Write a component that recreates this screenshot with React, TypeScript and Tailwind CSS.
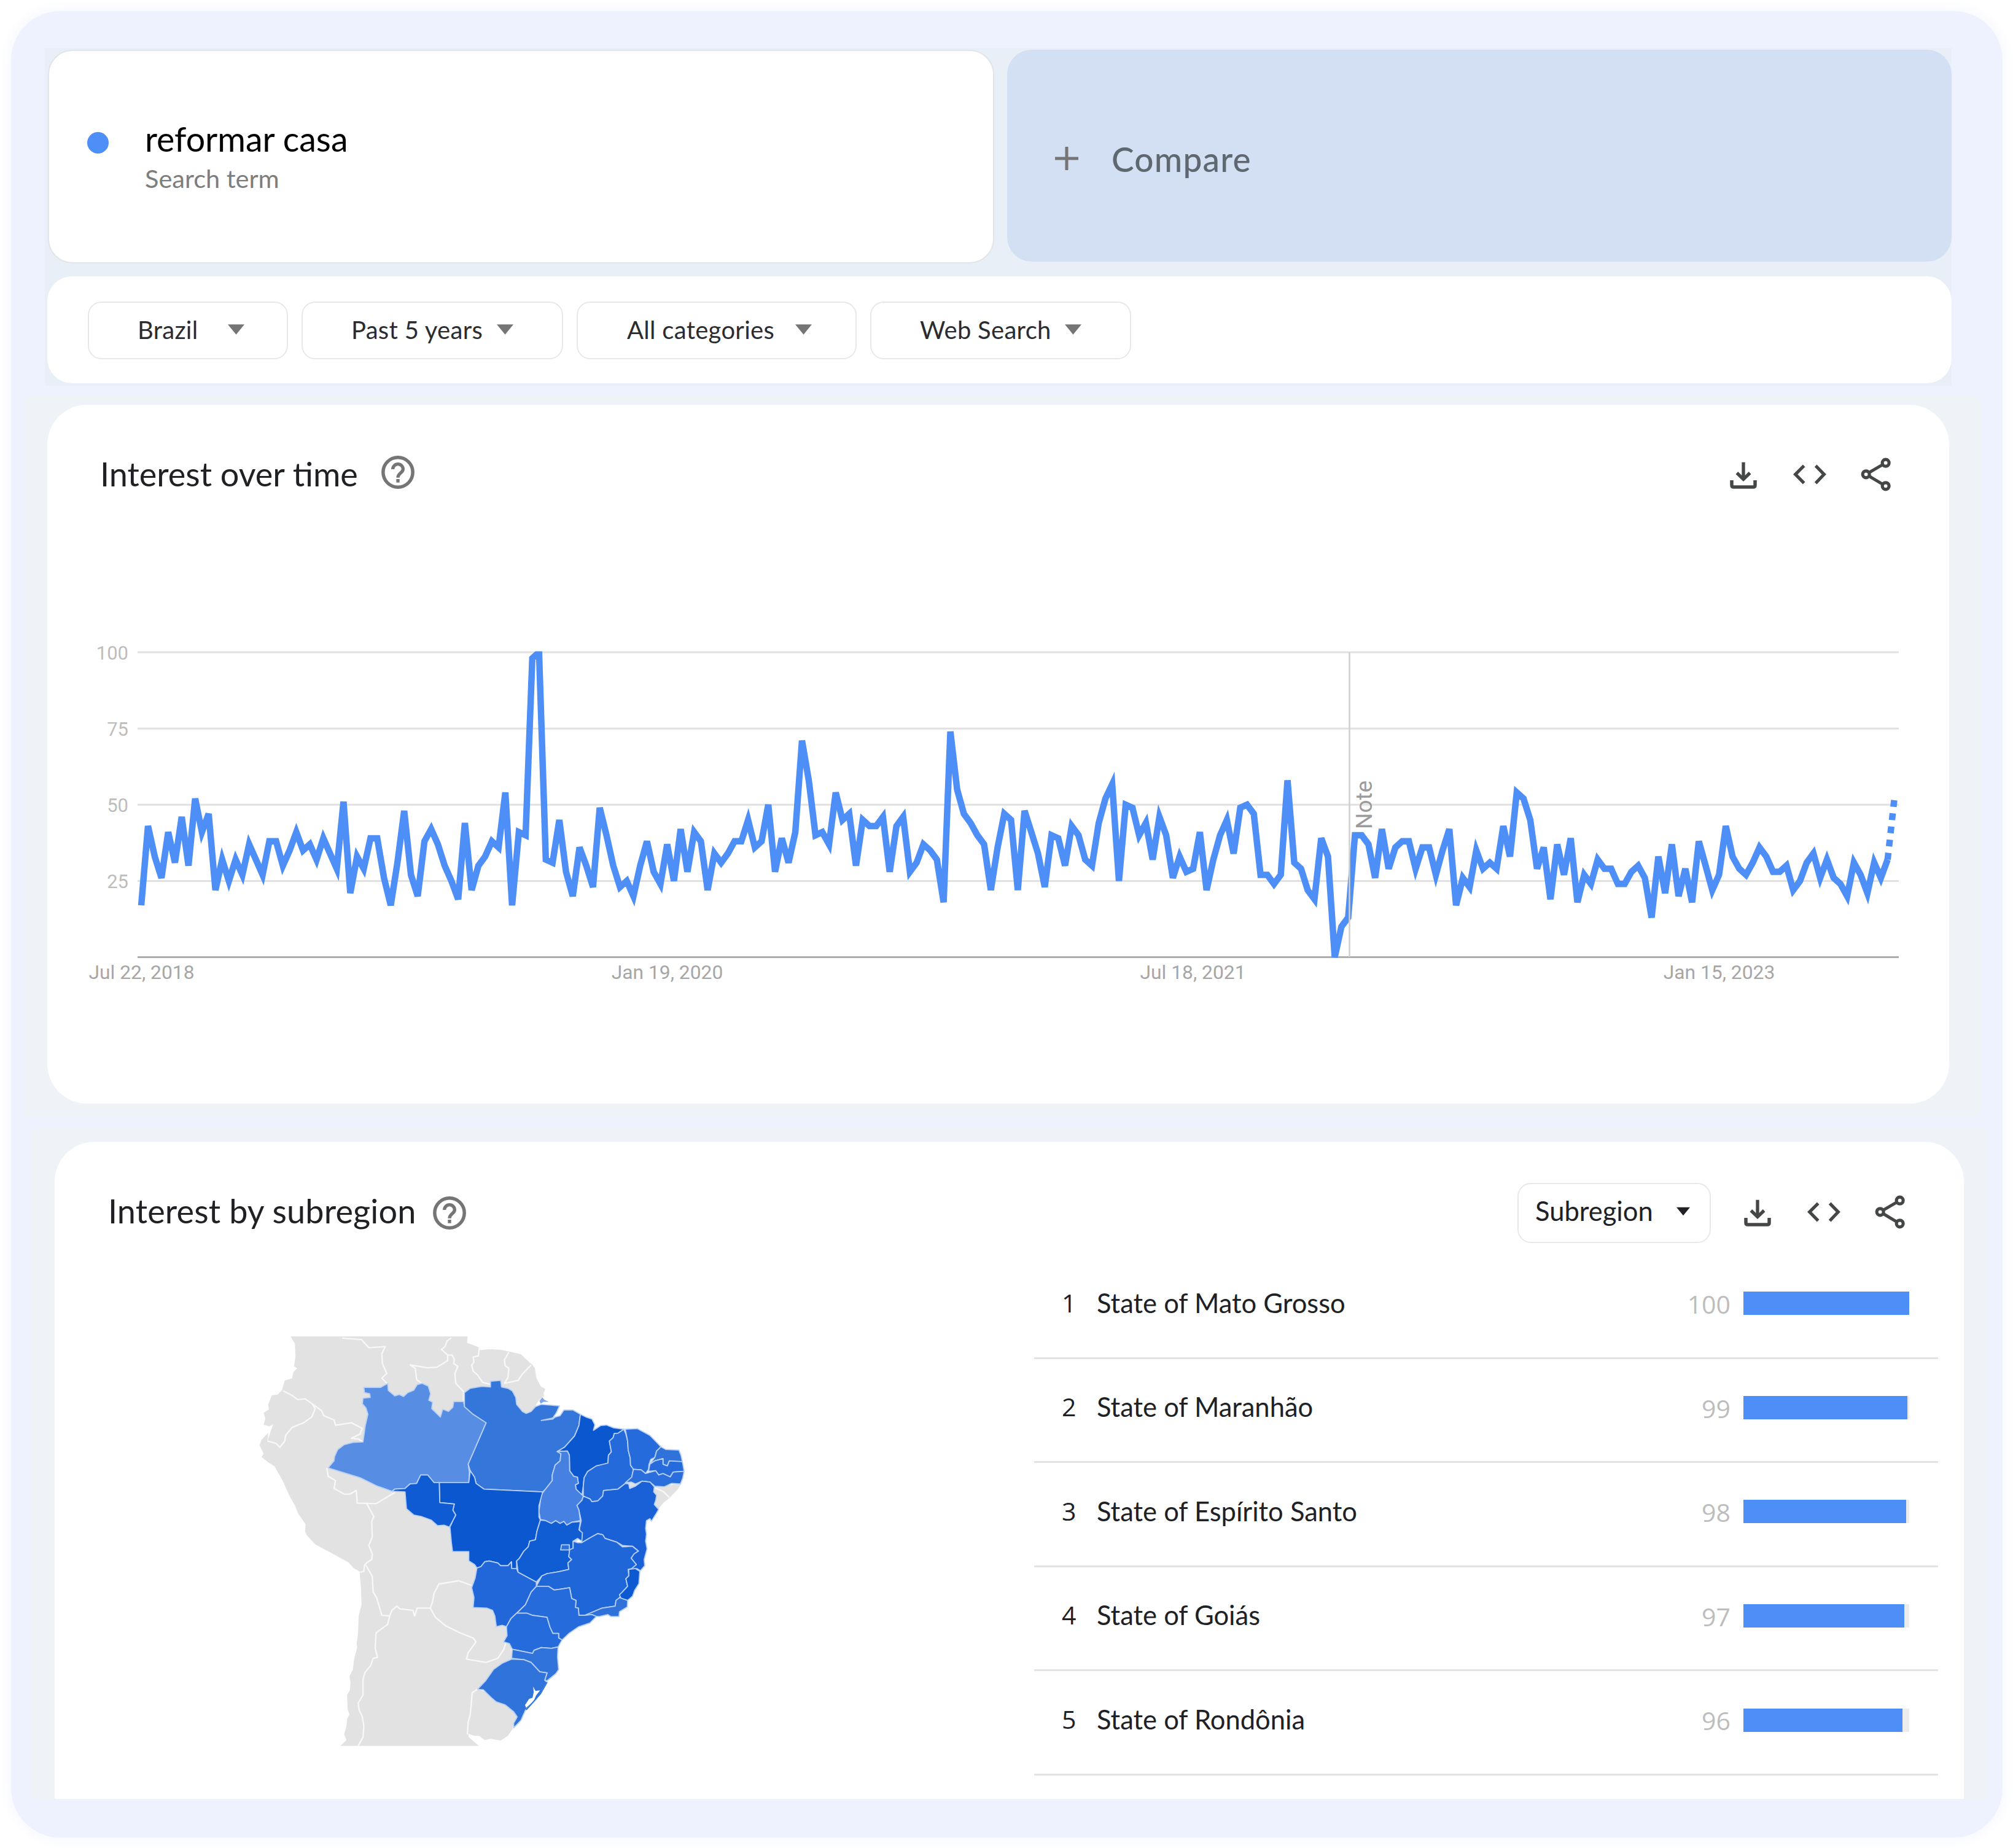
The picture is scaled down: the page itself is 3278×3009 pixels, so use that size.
import React from 'react'

/* ---------- icons ---------- */

function HelpIcon({ className = '' }: { className?: string }) {
  return (
    <svg viewBox="66 216 162 162" className={'h-[54px] w-[54px] ' + className} fill="none" stroke="#757575">
      <circle cx="147" cy="297" r="72.5" strokeWidth="16.5" />
      <path d="M122 282a25 25 0 0 1 50 0c0 18-25 19-25 41" strokeWidth="16" />
      <path d="M139 330h16v17h-16z" fill="#757575" stroke="none" />
    </svg>
  )
}

function PanelActions() {
  return (
    <div className="flex items-center" aria-label="Panel actions">
      <svg viewBox="60 375 132 132" className="h-[44px] w-[44px]" fill="none" stroke="#444746">
        <path d="M126 377v82" strokeWidth="16" />
        <path d="M94 429l32 31 32-31" strokeWidth="16" />
        <path d="M69 465v24q0 9 9 9h96q9 0 9-9v-24" strokeWidth="16.5" />
      </svg>
      <svg viewBox="369 387 162 99" className="mb-[3px] ml-[59px] h-[33px] w-[54px]" fill="none" stroke="#444746" strokeWidth="15.5">
        <path d="M422 394l-42 42 42 43M479 394l41 42-41 43" />
      </svg>
      <svg viewBox="699 354 147 165" className="mb-[3px] ml-[56px] h-[55px] w-[49px]" fill="none" stroke="#444746" strokeWidth="15.5">
        <circle cx="821" cy="380" r="16.5" />
        <circle cx="725" cy="436" r="16.5" />
        <circle cx="821" cy="493" r="16.5" />
        <path d="M739 428l68-40M739 444l68 41" strokeWidth="15" />
      </svg>
    </div>
  )
}

function Caret({ className = '' }: { className?: string }) {
  return (
    <svg viewBox="0 0 26 16" className={className}>
      <path d="M0 0h26L13 16z" fill="currentColor" />
    </svg>
  )
}

/* ---------- time series ---------- */

const weekly = [
  17, 43, 33, 26, 41, 31, 46, 30, 52, 41, 47, 22, 32, 25, 32, 27, 37, 32, 27, 38, 38, 30, 35, 41, 35, 37, 32, 39, 34, 29,
  51, 21, 33, 29, 39, 39, 26, 17, 31, 48, 27, 20, 38, 42, 37, 30, 25, 19, 44, 22, 30, 33, 38, 36, 54, 17, 41, 40, 98, 100,
  32, 31, 45, 28, 20, 36, 30, 23, 49, 40, 30, 23, 25, 20, 30, 38, 28, 24, 37, 25, 42, 28, 41, 38, 22, 34, 31, 34, 38, 38,
  45, 36, 38, 50, 28, 39, 31, 41, 71, 58, 40, 41, 37, 54, 45, 47, 30, 45, 43, 43, 46, 28, 43, 46, 28, 31, 37, 35, 32, 18,
  74, 55, 47, 44, 40, 37, 22, 36, 47, 45, 22, 48, 41, 34, 23, 40, 39, 30, 43, 40, 32, 30, 44, 52, 56.7, 25, 50, 49, 40, 44,
  32, 46, 40, 26, 33, 28, 29, 41, 22, 32, 40, 45, 34, 49, 50, 47, 27, 27, 24, 27, 58, 31, 29, 22, 19, 39, 33, 0, 10, 13,
  40, 40, 37, 26, 42, 29, 36, 38, 38, 29, 36, 36, 27, 35, 42, 17, 26, 23, 35, 29, 31, 29, 43, 33, 54, 52, 45, 29, 36, 19,
  37, 27, 39, 18, 27, 24, 32, 29, 29, 24, 24, 28, 30, 26, 13, 33, 21, 37, 20, 29, 18, 38, 30, 22, 27, 43, 33, 29, 27, 31,
  36, 33, 28, 28, 30, 22, 25, 31, 34, 26, 32, 26, 24, 20, 31, 27, 21, 31, 26, 32,
]
const partial = 52

const px = (i: number) => 230 + i * 10.98
const py = (v: number) => 1559.5 - v * 4.965
const last = weekly.length - 1

function TimeChart() {
  const points = weekly.map((v, i) => `${px(i).toFixed(1)},${py(v).toFixed(1)}`).join(' ')
  return (
    <svg viewBox="130 1040 2980 580" className="block h-[580px] w-[2980px] font-[Roboto,sans-serif]">
      <clipPath id="plot">
        <rect x="224" y="1061.5" width="2868" height="499.5" />
      </clipPath>
      {[100, 75, 50, 25].map((v) => (
        <g key={v}>
          <path d={`M224 ${py(v)}H3092`} stroke="#e1e1e1" strokeWidth="3" />
          <text x="209" y={py(v) + 11.5} textAnchor="end" fontSize="31" fill="#bdbdbd">
            {v}
          </text>
        </g>
      ))}
      <path d="M224 1559.5H3092" stroke="#adadad" strokeWidth="3" />
      <g clipPath="url(#plot)" fill="none" stroke="#4d8ef7" strokeWidth="10.5">
        <polyline points={points} />
        <path d={`M${px(last)} ${py(32)}L${px(last + 1)} ${py(partial)}`} strokeDasharray="11 10.6" />
      </g>
      <path d="M2197.5 1063V1559" stroke="#cfcfcf" strokeWidth="2.5" />
      <text transform="translate(2233.5 1351) rotate(-90)" fontSize="37" fill="#9b9b9b">
        Note
      </text>
      <g fontSize="31.8" fill="#a6a6a6" textAnchor="middle">
        <text x="230.5" y="1594.5">Jul 22, 2018</text>
        <text x="1086.5" y="1594.5">Jan 19, 2020</text>
        <text x="1942.5" y="1594.5">Jul 18, 2021</text>
        <text x="2799.5" y="1594.5">Jan 15, 2023</text>
      </g>
    </svg>
  )
}

/* ---------- map ---------- */

const land =
  '155,59 766,59 764,82 782,88 806,98 808,108 840,104 880,106 908,112 950,122 968,140 990,160 998,172 1003,205 1018,236 1034,245 1028,262 1030,270 1012,285 1000,305 985,330 1000,400 1100,500 1350,560 1412,588 1450,588 1505,580 1490,602 1462,632 1440,650 1425,670 1400,640 1200,700 1000,1000 900,1140 915,1150 918,1200 860,1240 800,1310 860,1330 925,1385 938,1408 925,1425 922,1450 905,1475 880,1492 845,1486 825,1490 805,1475 788,1475 768,1468 770,1480 805,1511 327,1511 348,1490 340,1470 348,1440 350,1415 358,1400 352,1380 350,1330 360,1312 362,1285 358,1265 370,1240 374,1205 385,1160 383,1150 388,1110 390,1050 400,1010 398,950 393,893 372,880 355,860 240,796 212,765 205,750 207,725 180,685 172,662 150,622 130,575 100,520 78,505 55,487 62,475 48,445 55,425 78,400 75,430 95,370 82,378 62,372 68,350 62,330 80,318 78,300 90,268 110,265 125,250 135,215 160,208 165,185 178,172 167,165 172,130 170,85'

const borders = [
  '333,65 400,70 425,99 482,95 470,120 472,155 487,190 470,207 490,228',
  '710,64 695,75 688,95 676,105 697,125 697,145 660,168 628,170 568,160 585,172 590,212 608,225',
  '697,125 712,125 720,140 718,155 732,165 722,190 725,225 752,255 752,290',
  '806,98 803,128 785,132 788,150 780,160 785,182 800,195 818,222 848,230',
  '908,115 893,142 895,162 908,172 905,205 893,225 940,215 955,192 985,160',
  '130,252 160,268 180,283 205,280 230,298 262,322 270,340 305,355 310,374 365,365 402,385 395,405 365,420 388,422 405,433',
  '230,298 240,315 228,345 200,365 160,382 138,410 135,430 118,452 105,438 75,430',
  '280,525 285,555 310,570 305,598 340,618 360,618 382,605 385,650 450,652 515,612',
  '418,652 442,697 435,715 437,770 425,800 437,830 435,850 420,860 410,870 408,892 393,895',
  '415,870 437,910 440,965 452,985 470,1048 497,1050',
  '497,1050 505,1030 522,1015 532,1025 577,1030 583,1050 592,1022 637,1022 645,1000 650,970 667,937 735,925 780,942',
  '637,1022 655,1055 690,1085 740,1110 785,1128 795,1142 768,1180 762,1203 830,1215 870,1200 890,1170 900,1140',
  '497,1050 490,1080 450,1110 447,1165 455,1197 440,1200 432,1225 412,1250 405,1275 405,1330 388,1360 392,1385 402,1405 408,1440 405,1480 388,1511',
  '800,1310 782,1322 775,1400 768,1425 765,1470',
  '1410,595 1440,608 1462,630',
]

const states: [string, string][] = [
  ['#578de3', '408,240 465,240 490,226 492,250 515,270 530,265 545,272 560,258 580,250 592,230 608,225 630,235 638,262 632,285 645,292 642,315 672,345 680,317 700,325 715,310 718,290 752,290 755,308 785,335 830,365 768,512 772,540 770,577 668,577 650,577 628,550 604,550 590,580 567,582 550,598 515,600 505,608 455,590 395,560 285,525 305,500 307,485 318,460 340,443 370,435 405,433 413,375 422,335 415,312 403,298 405,278 430,275 428,262 410,258'],
  ['#3576da', '755,258 775,243 815,236 845,238 845,218 880,215 883,238 905,243 920,252 932,275 935,300 955,325 968,332 985,325 1000,308 1020,300 1083,305 1072,330 1060,348 1020,357 1060,352 1068,345 1085,340 1098,320 1130,320 1155,335 1150,375 1135,412 1100,452 1075,467 1088,475 1085,500 1068,515 1058,550 1058,570 1035,600 1025,610 822,600 795,580 790,558 775,535 768,512 830,365 785,335 755,308'],
  ['#0b57d0', '1155,335 1175,345 1195,352 1205,372 1200,392 1225,375 1245,373 1270,383 1305,388 1285,402 1272,403 1268,418 1255,430 1262,468 1252,480 1250,508 1230,515 1210,518 1180,538 1168,560 1165,590 1160,625 1140,600 1138,585 1148,580 1145,558 1132,555 1118,535 1117,480 1110,465 1075,467 1100,452 1135,412 1150,375'],
  ['#256adb', '1305,388 1312,405 1318,430 1320,462 1327,490 1328,515 1338,530 1332,560 1310,580 1285,600 1235,605 1232,625 1215,642 1195,645 1188,635 1165,625 1165,590 1168,560 1180,538 1210,518 1250,508 1252,480 1262,468 1255,430 1268,418 1272,403 1285,402'],
  ['#256bdb', '1310,388 1352,386 1395,410 1433,450 1418,465 1412,488 1398,495 1392,512 1390,530 1380,545 1365,532 1338,530 1328,515 1327,490 1320,462 1318,430'],
  ['#2f72da', '1433,450 1450,460 1495,462 1502,480 1507,503 1475,503 1462,500 1455,518 1440,512 1440,492 1412,500 1395,510 1412,488 1418,465'],
  ['#256bdb', '1395,512 1412,500 1440,492 1440,512 1455,518 1462,500 1507,503 1513,537 1475,540 1465,557 1440,545 1425,550 1415,535 1390,537'],
  ['#2a6edb', '1338,530 1365,532 1380,545 1415,535 1425,550 1440,545 1465,557 1475,540 1513,537 1508,562 1500,582 1470,580 1445,592 1412,590 1395,575 1368,572 1345,582 1330,575 1310,578 1332,558'],
  ['#1a60d7', '1165,625 1188,635 1195,645 1215,642 1232,625 1235,605 1285,600 1310,580 1322,582 1325,598 1345,590 1368,572 1395,575 1410,592 1408,610 1418,622 1415,640 1410,655 1425,672 1415,690 1400,714 1395,705 1383,712 1380,740 1383,760 1380,785 1385,812 1375,850 1377,872 1362,890 1350,882 1330,885 1332,870 1348,868 1330,845 1340,830 1355,820 1335,803 1300,800 1280,788 1240,775 1232,762 1215,758 1190,772 1160,790 1152,740 1158,712 1150,675 1143,658 1160,640'],
  ['#4680e0', '1075,467 1110,465 1117,480 1118,535 1132,555 1145,558 1148,580 1138,585 1140,600 1165,625 1160,640 1143,658 1150,675 1155,712 1125,718 1108,728 1098,715 1085,722 1070,712 1055,722 1035,712 1017,708 1012,680 1020,620 1035,600 1058,570 1058,550 1068,515 1085,500 1088,475'],
  ['#0b57d0', '775,535 790,558 795,580 822,600 1025,610 1017,640 1012,660 1012,700 1017,710 1005,750 1000,780 980,785 975,805 960,820 945,845 935,855 935,882 918,882 917,858 905,872 880,872 870,862 840,855 825,858 812,875 798,880 790,868 770,855 770,822 714,822 710,790 705,735 715,712 725,692 715,675 720,653 670,648 668,577 770,577'],
  ['#0f5bd3', '505,608 515,600 550,598 567,582 590,580 604,550 628,550 650,577 668,577 670,648 720,653 715,675 725,692 715,712 703,735 685,728 662,730 640,710 605,697 580,692 555,670 550,610'],
  ['#0f5cd3', '1017,710 1035,712 1055,722 1070,712 1085,722 1098,715 1108,728 1125,718 1155,715 1150,745 1162,755 1160,785 1145,775 1130,785 1130,810 1118,815 1115,840 1125,850 1112,862 1115,885 1080,893 1040,900 1022,908 1003,930 940,895 935,855 945,845 960,820 975,805 980,785 1000,780 1005,750'],
  ['#1f66d8', '1160,790 1190,772 1215,758 1232,762 1240,775 1280,788 1300,805 1335,803 1355,820 1340,830 1330,845 1348,868 1332,882 1320,885 1322,908 1312,918 1318,945 1300,965 1290,985 1278,995 1275,1015 1230,1022 1170,1048 1150,1048 1148,1022 1138,1020 1140,995 1125,988 1118,950 1085,955 1065,958 1045,945 1003,945 1022,908 1040,900 1080,893 1115,885 1112,862 1125,850 1115,840 1118,815 1130,810 1130,785 1145,790'],
  ['#0d59d2', '1322,885 1345,882 1360,892 1357,935 1342,960 1335,980 1318,995 1296,990 1290,975 1300,965 1318,945 1312,918 1322,908'],
  ['#2f72da', '1290,985 1318,995 1317,1018 1290,1035 1288,1052 1260,1052 1250,1045 1220,1052 1195,1050 1170,1048 1230,1022 1275,1015 1278,995'],
  ['#256bdb', '1003,945 1045,945 1065,958 1085,955 1118,950 1125,988 1140,995 1138,1020 1148,1022 1150,1048 1170,1048 1195,1045 1210,1052 1188,1075 1150,1088 1118,1110 1092,1135 1080,1128 1080,1112 1060,1112 1050,1090 1040,1055 990,1048 970,1040 935,1040 965,1010 985,965'],
  ['#2267d9', '798,880 812,875 825,858 840,855 870,862 880,872 905,872 917,858 918,882 935,882 940,895 1003,930 1003,945 985,965 965,1010 935,1040 915,1060 900,1088 885,1083 865,1088 860,1050 852,1030 832,1022 785,1020 788,985 780,950 792,915'],
  ['#256bdb', '935,1040 970,1040 990,1048 1040,1055 1050,1090 1060,1112 1080,1112 1080,1128 1092,1135 1078,1160 1055,1165 1020,1162 995,1172 990,1183 920,1168 910,1148 890,1142 902,1120 900,1088 915,1060'],
  ['#3073db', '920,1168 990,1183 995,1172 1020,1162 1055,1165 1078,1160 1076,1195 1080,1240 1070,1255 1040,1280 1032,1278 1040,1252 1015,1248 985,1215 960,1205 918,1200'],
  ['#3073db', '855,1240 885,1218 918,1203 960,1205 985,1215 1015,1248 1040,1252 1032,1278 1040,1285 1018,1325 995,1355 965,1385 950,1420 925,1447 925,1430 937,1408 925,1390 895,1365 865,1355 848,1340 820,1312 800,1310 828,1280'],
]

function SubregionMap() {
  return (
    <svg viewBox="0 0 1568 1568" preserveAspectRatio="none" className="block h-[720px] w-[740px] shrink-0" strokeLinejoin="round">
      <polygon points={land} fill="#e2e2e2" />
      {borders.map((b) => (
        <polyline key={b} points={b} fill="none" stroke="#f8f8f8" strokeWidth="5" />
      ))}
      {states.map(([fill, points]) => (
        <polygon key={points} points={points} fill={fill} stroke="#b9d0f6" strokeWidth="3.8" />
      ))}
      <path d="M1090 798h27v18h-30z" fill="#2e70da" stroke="#b9d0f6" strokeWidth="3.8" />
      <path d="M1014 287l10-12 6 8 16 8-18 0-10 6z" fill="#7ba6ea" />
      <path d="M992 1300l8 16 16-2-14 18-8 20-26 24-4-10 14-22 12-4 4-20z" fill="#fff" />
      <path d="M1040 1285l-22 40-50 58" fill="none" stroke="#3073db" strokeWidth="4" />
    </svg>
  )
}

/* ---------- pieces ---------- */

function Filter({ label, box, caret }: { label: string; box: string; caret: string }) {
  return (
    <button className={'flex h-[94px] items-center rounded-[22px] border-2 border-[#e8e8e8] pb-[3px] text-left text-[#2b2c2f] ' + box}>
      <span className="whitespace-nowrap">{label}</span>
      <Caret className={'h-[17px] w-[27px] shrink-0 text-[#757575] ' + caret} />
    </button>
  )
}

const regions: [string, number][] = [
  ['State of Mato Grosso', 100],
  ['State of Maranhão', 99],
  ['State of Espírito Santo', 98],
  ['State of Goiás', 97],
  ['State of Rondônia', 96],
]

export default function App() {
  return (
    <div className="flex h-[3009px] w-[3278px] overflow-hidden bg-white pt-[18px] pl-[18px] font-[Lato,sans-serif]">
      <main className="flex h-[2974px] w-[3243px] flex-col items-start rounded-[80px] bg-[#edf2fe] pt-[60px] shadow-[0_0_16px_10px_#fafbff]">
        <section className="ml-[55px] h-[550px] w-[3105px] bg-[#e9eff6] pt-[3px]">
          <div className="flex items-start gap-[21px] pl-[5px]">
            <div className="flex h-[348px] w-[1541px] items-start rounded-[40px] border-2 border-[#e1e5ea] bg-white pl-[62px]">
              <span className="mt-[132px] h-[35px] w-[35px] rounded-full bg-[#4d8ef7]" />
              <div className="mt-[106px] ml-[59px]">
                <div className="text-[55.5px] leading-[74px] text-black">reformar casa</div>
                <div className="mt-0.5 text-[41.5px] leading-[50px] text-[#7d7d7d]">Search term</div>
              </div>
            </div>
            <div className="flex h-[345px] w-[1538px] items-center rounded-[40px] bg-[#d3e0f3] pt-[9px] pl-[78px]">
              <svg viewBox="0 0 38 38" className="h-[38px] w-[38px]" stroke="#757575" strokeWidth="5">
                <path d="M0 19h38M19 0v38" />
              </svg>
              <span className="ml-[54px] pt-0.5 text-[55px] font-medium tracking-[1.2px] text-[#5f6770]">Compare</span>
            </div>
          </div>
          <div className="mt-[21px] ml-[4px] flex h-[174px] w-[3101px] items-start gap-[22px] rounded-[40px] bg-white pt-[41px] pl-[66px] text-[40px] tracking-[0.3px]">
            <Filter label="Brazil" box="w-[326px] pl-[79px]" caret="ml-[49px]" />
            <Filter label="Past 5 years" box="w-[426px] pl-[79px]" caret="ml-[23px]" />
            <Filter label="All categories" box="w-[456px] pl-[80px]" caret="ml-[34px]" />
            <Filter label="Web Search" box="w-[425px] pl-[79px]" caret="ml-[22px]" />
          </div>
        </section>

        <section className="mt-[17px] ml-[22px] h-[1175px] w-[3186px] bg-[#eff3f8] pt-[14px] pl-[37px]">
          <div className="flex h-[1138px] w-[3097px] flex-col rounded-[65px] bg-white">
            <header className="flex h-[230px] items-center pr-[95px] pl-[86px]">
              <h2 className="pb-[6px] text-[54px] text-[#202124]">Interest over time</h2>
              <HelpIcon className="mr-auto mb-[11px] ml-[38px]" />
              <PanelActions />
            </header>
            <div className="mt-[150px] ml-[53px]">
              <TimeChart />
            </div>
          </div>
        </section>

        <section className="mt-[17px] ml-[31px] h-[1092px] w-[3188px] bg-[#eff3f8] pt-[22px] pl-[40px]">
          <div className="h-[1070px] w-[3109px] rounded-t-[65px] bg-white">
            <header className="flex h-[231px] items-center pr-[96px] pl-[87px]">
              <h2 className="pb-[7px] text-[54px] tracking-[0.15px] text-[#202124]">Interest by subregion</h2>
              <HelpIcon className="mr-auto ml-[28px]" />
              <button className="mr-[54px] flex h-[98px] w-[315px] items-center rounded-[22px] border-2 border-[#e8e8e8] pb-[5px] pl-[27px] text-[43.5px] text-[#202124]">
                Subregion
                <Caret className="ml-[38px] h-[15px] w-[22px]" />
              </button>
              <PanelActions />
            </header>
            <div className="flex pl-[311px]">
              <div className="pt-[59px]">
                <SubregionMap />
              </div>
              <ol className="-mt-[47px] ml-[544px] w-[1472px]">
                {regions.map(([name, value], i) => (
                  <li key={name} className="flex h-[169.6px] items-center border-b-3 border-[#e3e3e3] pr-[47px] pb-[8px] pl-[45px] text-[43.5px] text-[#202124]">
                    <span className="w-[57px] pb-[2px] font-['Open_Sans',sans-serif] text-[41px]">{i + 1}</span>
                    <span className="flex-1 pb-[2px]">{name}</span>
                    <span className="mr-[21px] pt-[3px] font-['Open_Sans',sans-serif] text-[41px] text-[#bdbdbd]">{value}</span>
                    <span className="h-[38px] w-[270px] bg-[#ececec]">
                      <span className="block h-full bg-[#4d8ef7]" style={{ width: `${value}%` }} />
                    </span>
                  </li>
                ))}
              </ol>
            </div>
          </div>
        </section>
      </main>
    </div>
  )
}
